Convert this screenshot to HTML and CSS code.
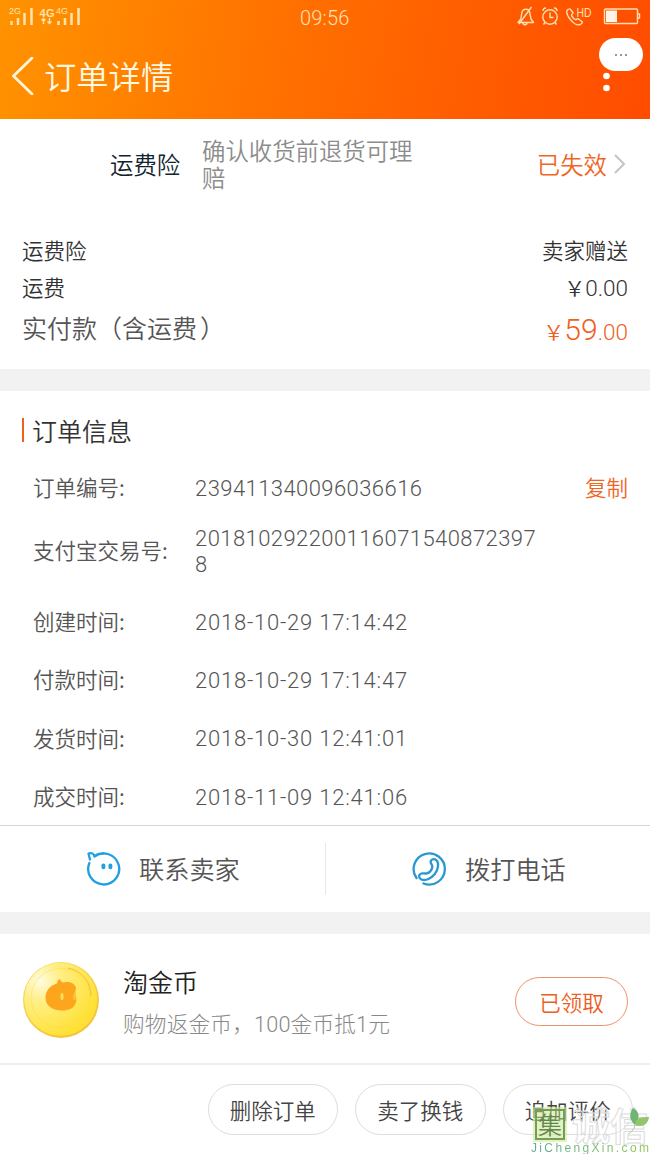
FILE: index.html
```html
<!DOCTYPE html>
<html lang="zh-CN">
<head>
<meta charset="utf-8">
<title>订单详情</title>
<link rel="stylesheet" href="styles.css">
</head>
<body>
<header class="header">
  <div class="status">
    <svg class="signals" width="82" height="26" viewBox="0 0 82 26">
      <g class="sig-text"><text x="9" y="14" font-size="9" textLength="12">2G</text><text x="39.500" y="16.500" font-size="11" class="strong" textLength="15">4G</text><text x="56" y="14" font-size="9" textLength="12">4G</text></g>
      <path d="M11.5 21v4M18 18v7M24.500 13v12M31.500 8v17M58.500 21v4M65 18v7M71.500 13v12M78.500 8v17" class="bars"/>
      <path d="M43.500 24v-5.500M41.500 20.500l2-2 2 2M49.500 18v5.500M47.500 21.500l2 2 2-2" class="arrows"/>
    </svg>
    <span class="time">09:56</span>
    <svg class="status-icons" width="130" height="30" viewBox="0 0 130 30">
      <g fill="none" stroke="#ffe0b0" stroke-width="1.4" stroke-linejoin="round">
        <path d="M1 22.500h15.500l-2.500-3.500-1.200-6c-.5-5-7-5-8 0l-1 6zM6 22.500c0 3 4 3 4 0M14.500 7 2 24"/>
        <circle cx="33" cy="17" r="7.200"/><path d="M33 12.500v5h3.500M26 11c0-2 1-3 3-3M40 11c0-2-1-3-3-3M28 22.500l-1.500 2M38 22.500l1.500 2"/>
        <path d="M51 9.500c-2 1-1.700 4.500 1.200 8.500 3.500 5 8 8 11 6.500 1.500-.8 2.500-2 2-2.800l-4-3c-1-.4-1.600 1.200-2.800.9-1.600-.5-4-3.500-3.800-4.800.2-1.200 1.800-1 1.500-2l-3-3.800c-.6-.4-1.400 0-2.100.5z"/>
        <rect x="87.500" y="9" width="33" height="14.500" rx="1"/><path d="M121 14h1.500v4H121"/>
      </g>
      <rect x="89" y="10.500" width="11" height="11.500" fill="#fff2e6"/>
      <text x="59.500" y="17" font-size="12" textLength="15" lengthAdjust="spacingAndGlyphs">HD</text>
    </svg>
  </div>
  <div class="titlebar">
    <svg class="back" width="22" height="38" viewBox="0 0 22 38"><path d="M20 1 1.500 19 20 37" fill="none" stroke="#fff4dc" stroke-width="2.800" stroke-linecap="round"/></svg>
    <h1>订单详情</h1>
    <svg class="more" width="10" height="30" viewBox="0 0 10 30"><circle cx="4.500" cy="10" r="3.300"/><circle cx="4.500" cy="22" r="3.300"/></svg>
  </div>
  <div class="bubble"><i></i><i></i><i></i></div>
</header>

<main>
  <section class="insurance">
    <span class="ins-name">运费险</span>
    <span class="ins-desc">确认收货前退货可理赔</span>
    <span class="ins-state">已失效</span>
    <svg width="14" height="24" viewBox="0 0 14 24"><path d="m2 2 9 9-9 9" fill="none" stroke="#c4c4c4" stroke-width="2"/></svg>
  </section>
  <section class="fees">
    <div class="fee"><span>运费险</span><span>卖家赠送</span></div>
    <div class="fee"><span>运费</span><span class="num"><b class="yen">￥</b>0.00</span></div>
    <div class="fee total"><span>实付款<span class="paren">（</span>含运费<span class="paren close">）</span></span><span class="num price"><b class="yen">￥</b><em>59</em>.00</span></div>
  </section>
  <section class="info">
    <h2>订单信息</h2>
    <dl>
      <div class="row first"><dt>订单编号:</dt><dd>239411340096036616</dd><a class="copy">复制</a></div>
      <div class="row tall"><dt>支付宝交易号:</dt><dd>2018102922001160715408723978</dd></div>
      <div class="row"><dt>创建时间:</dt><dd class="date">2018-10-29 17:14:42</dd></div>
      <div class="row"><dt>付款时间:</dt><dd class="date">2018-10-29 17:14:47</dd></div>
      <div class="row"><dt>发货时间:</dt><dd class="date">2018-10-30 12:41:01</dd></div>
      <div class="row"><dt>成交时间:</dt><dd class="date">2018-11-09 12:41:06</dd></div>
    </dl>
  </section>
  <section class="contact">
    <div class="contact-item">
      <svg width="36" height="36" viewBox="0 0 36 36"><g fill="none" stroke="#1fa0df" stroke-width="2.300" stroke-linecap="round" stroke-linejoin="round"><path d="M3.400 12A15.500 15.500 0 1 0 8.500 5.500M4 8.500 2.500 2.500c3-1 5.500 0 6 3 2-2.200 5-3 9-3"/></g><g fill="#1fa0df"><rect x="15.500" y="12.500" width="3.800" height="5.800" rx="1.800"/><rect x="22.500" y="12.500" width="3.800" height="5.800" rx="1.800"/></g></svg>
      <span>联系卖家</span>
    </div>
    <div class="contact-item">
      <svg width="36" height="36" viewBox="0 0 36 36"><g fill="none" stroke="#2a97d2" stroke-width="2.300" stroke-linecap="round" stroke-linejoin="round"><path d="M4.500 27A15.600 15.600 0 1 1 11.500 32.500"/><path d="M24.300 9.200c-2.500-2-6.200-.7-5.600 2.200.5 2.400 2.200 2.400 1.500 5.200-.8 3.100-2.700 5-5.300 5.700-2.700.7-3.400-.5-5.500.2-3.200 1.100-2.900 4.700.1 6 4 1.700 10-1.300 13.300-5.500 3.500-4.600 4.500-11.300 1.500-13.800z"/></g></svg>
      <span>拨打电话</span>
    </div>
  </section>
  <section class="coin">
    <svg width="78" height="78" viewBox="0 0 78 78">
      <defs>
        <linearGradient id="rim" x1="0" y1="0" x2=".6" y2="1"><stop offset="0" stop-color="#f6dd62"/><stop offset="1" stop-color="#f5c23c"/></linearGradient>
        <radialGradient id="face" cx=".22" cy=".25" r=".8"><stop offset="0" stop-color="#fffbe0"/><stop offset=".35" stop-color="#ffef85"/><stop offset="1" stop-color="#ffe135"/></radialGradient>
      </defs>
      <circle cx="39" cy="39" r="38" fill="url(#rim)"/>
      <circle cx="38.700" cy="38.300" r="36.500" fill="url(#face)"/>
      <circle cx="38.500" cy="37" r="29.500" fill="none" stroke="#f8d14b" opacity=".35"/>
      <path d="M46 7C61 10 69 22 69 35" fill="none" stroke="#eebf42"/>
      <path d="M35 22.500c0-2 1-4 3-4.500.5 2 2 3.500 4 3.500 6-1.500 11.500 1 12 6-1 3-1 6 0 9 .5 2 .5 4-.5 6-2 5-7 7-13 7-9.500 0-17-4.500-17-12.500 0-7.500 4.500-12.500 11.500-14.500z" fill="#fda51c"/>
      <ellipse cx="40" cy="35.500" rx="1.600" ry="3.800" fill="#ffd95c"/><ellipse cx="52.500" cy="35.500" rx="1.300" ry="3.800" fill="#ffc139"/>
    </svg>
    <div class="coin-text"><h3>淘金币</h3><p>购物返金币，100金币抵1元</p></div>
    <span class="claimed">已领取</span>
  </section>
</main>
<footer class="actions">
  <span class="pill">删除订单</span><span class="pill">卖了换钱</span><span class="pill">追加评价</span>
  <div class="watermark">
    <div class="wm-top"><span class="wm-seal">集</span><span class="wm-name">诚信</span></div>
    <svg class="leaf" width="24" height="28" viewBox="0 0 24 28"><path d="M9 18C3 13 3 6 7 1c6 3 8 10 2 17z" fill="#6fb573"/><path d="M9 18c0-8 7-8 14-8-1 7-6 11-14 8z" fill="#93c66c"/><path d="M9 17c0 4-3 8-7 10" fill="none" stroke="#a5cf91"/></svg>
    <div class="wm-url">JiChengXin.com</div>
  </div>
</footer>
</body>
</html>
```

FILE: styles.css
```css
* { box-sizing: border-box; }
body {
  margin: 0;
  width: 650px;
  height: 1155px;
  overflow: hidden;
  background: #fff;
  color: #444;
  font-family: "Noto Sans CJK SC", sans-serif;
  font-weight: 350;
  font-size: 21.500px;
  line-height: 1;
}
h1, h2, h3, p, dl, dd { margin: 0; font-weight: inherit; }
svg { display: block; flex: none; }

.header { position: relative; height: 119px; background: linear-gradient(100deg, #ff9300 0%, #ff7300 40%, #ff5e00 70%, #ff4c00 100%); }
.status { display: grid; grid-template-columns: 300px 217px 1fr; height: 38px; }
.sig-text, .status-icons text { font-family: "Liberation Sans", sans-serif; fill: #ffe3ae; font-weight: 400; }
.strong { font-weight: 700; }
.bars { stroke: #ffe3ae; stroke-width: 2.500; }
.arrows { stroke: #ffe3ae; stroke-width: 1.400; fill: none; }
.time { padding-top: 7px; font: 300 20px/23px Roboto, sans-serif; letter-spacing: .200px; color: #ffe1b8; }
.titlebar { display: flex; align-items: center; height: 76px; padding: 0 38px 0 12px; }
.titlebar h1 { flex: 1; margin-left: 10px; padding-bottom: 1px; font-size: 32.300px; color: #fff8e0; }
.more { fill: #fff; margin-top: 10px; }
.bubble { position: absolute; left: 599px; top: 38px; width: 44px; height: 33px; border-radius: 17px; background: #fff; display: flex; align-items: center; justify-content: center; gap: 3px; }
.bubble i { width: 2px; height: 2px; background: #86705e; border-radius: 1px; }

.insurance { display: flex; align-items: center; height: 92px; padding: 0 23px 1px 110px; font-size: 23.400px; }
.ins-name { width: 92px; color: #122330; }
.ins-desc { width: 217px; padding-bottom: 1px; line-height: 27px; color: #8c8c8c; }
.ins-state { margin-left: auto; margin-right: 6px; color: #f0651f; }

.fees { height: 158px; padding: 20px 22px 0; }
.fee { display: flex; align-items: center; justify-content: space-between; height: 37px; color: #333; }
.fee.total { height: 46px; padding-bottom: 1px; font-size: 25px; color: #555; }
.paren { display: inline-block; width: 25px; text-indent: 0; }
.paren.close { text-indent: 3px; }
.num { padding-top: 3px; font-family: Roboto, "Noto Sans CJK SC", sans-serif; font-weight: 300; font-size: 22.500px; }
.yen { font-weight: 350; font-size: 21px; }
.price { color: #f0601c; padding-top: 4px; }
.price em { font-style: normal; font-size: 30px; font-weight: 350; }

.info { height: 457px; border-top: 22px solid #f2f2f2; border-bottom: 1px solid #d4d4d4; padding: 27px 22px 0; }
.info h2 { height: 24px; line-height: 24px; padding-left: 8px; border-left: 2px solid #f0601c; font-size: 25px; color: #333; }
.row { display: flex; align-items: center; height: 58.400px; padding-left: 11px; color: #555; }
.row.first { height: 54px; margin-top: 19px; }
.row.tall { height: 72px; margin-bottom: 5.500px; }
dt { width: 162px; padding-bottom: 2px; white-space: nowrap; }
dd { width: 350px; padding-top: 2px; font: 300 22px/26px Roboto, sans-serif; letter-spacing: .430px; word-break: break-all; }
.date { letter-spacing: .780px; }
.copy { margin-left: auto; padding-bottom: 2px; color: #f0651f; }

.contact { display: grid; grid-template-columns: 1fr 1fr; align-items: center; height: 86px; font-size: 25.200px; color: #555; }
.contact-item { display: flex; align-items: center; height: 52px; padding-left: 86px; gap: 17px; }
.contact-item + .contact-item { border-left: 1px solid #e6e6e6; }
.coin { display: flex; align-items: center; height: 153px; border-top: 22px solid #f2f2f2; border-bottom: 2px solid #eee; padding: 2px 22px 0; }
.coin-text { margin: 5px auto 0 23px; }
.coin-text h3 { font-size: 25px; color: #222; }
.coin-text p { margin-top: 20px; font-family: Roboto, "Noto Sans CJK SC", sans-serif; font-weight: 300; font-size: 21.700px; letter-spacing: .150px; color: #888; }
.claimed { width: 113px; height: 49px; margin-top: 3px; line-height: 47px; text-align: center; border: 1px solid #ef9166; border-radius: 25px; color: #ed5c20; }

.actions { position: relative; display: flex; justify-content: flex-end; gap: 17px; height: 90px; padding: 19px 17px 0 0; }
.pill { width: 130.500px; height: 51px; line-height: 49px; text-align: center; border: 1px solid #ddd; border-radius: 26px; color: #444; }
.watermark { position: absolute; left: 530px; top: 41px; width: 120px; height: 48px; }
.wm-top { display: flex; align-items: center; }
.wm-seal { margin-left: 5px; width: 30px; height: 31px; border: 2px solid #779b5f; outline: 2px solid rgba(205, 237, 142, .6); background: rgba(196, 232, 130, .5); color: #62864f; font-size: 24px; line-height: 26px; text-align: center; }
.wm-name { margin-left: 7px; font-size: 38px; line-height: 36px; font-weight: 700; color: rgba(255, 255, 255, .35); -webkit-text-stroke: 1px #dcdcdc; }
.leaf { position: absolute; left: 96px; top: 1px; }
.wm-url { position: absolute; left: 1px; top: 36px; font: 400 12px/12px "Liberation Sans", sans-serif; letter-spacing: 2.350px; white-space: nowrap; background: linear-gradient(90deg, #5fae94, #94c455); -webkit-background-clip: text; color: transparent; }
```
